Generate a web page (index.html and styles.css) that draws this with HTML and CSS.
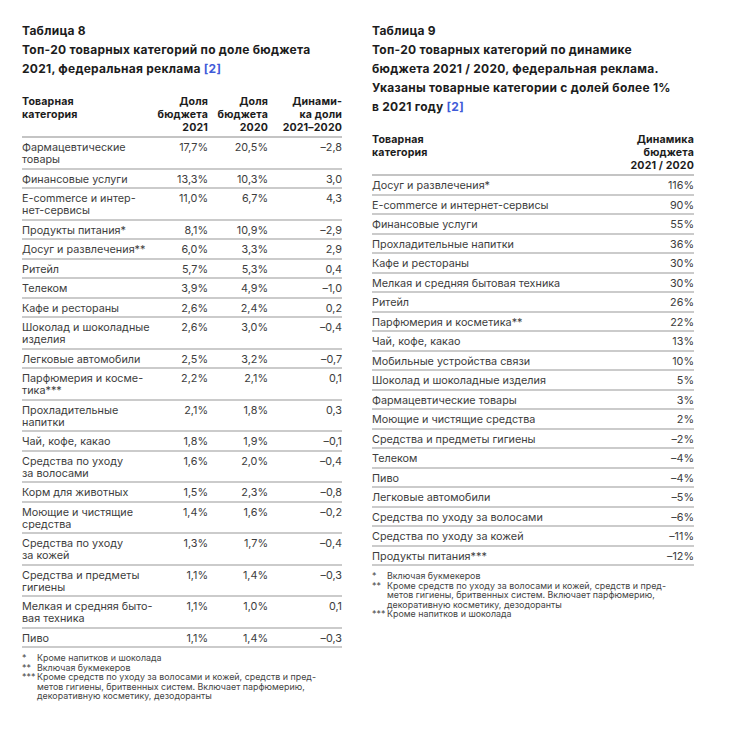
FILE: index.html
```html
<!DOCTYPE html>
<html lang="ru">
<head>
<meta charset="utf-8">
<title>Таблицы 8 и 9</title>
<link rel="stylesheet" href="styles.css">
</head>
<body>
<div class="page">
  <section class="panel panel-left">
    <h2 class="caption">Таблица 8<br>Топ-20 товарных категорий по доле бюджета<br>2021, федеральная реклама <span class="ref">[2]</span></h2>
    <table class="data data-8">
      <colgroup><col class="c-name"><col class="c-a"><col class="c-b"><col class="c-c"></colgroup>
      <thead>
        <tr><th class="name">Товарная<br>категория</th><th class="num">Доля<br>бюджета<br>2021</th><th class="num">Доля<br>бюджета<br>2020</th><th class="num">Динами-<br>ка доли<br>2021–2020</th></tr>
      </thead>
      <tbody>
        <tr><td>Фармацевтические<br>товары</td><td class="num">17,7%</td><td class="num">20,5%</td><td class="num">–2,8</td></tr>
        <tr><td>Финансовые услуги</td><td class="num">13,3%</td><td class="num">10,3%</td><td class="num">3,0</td></tr>
        <tr><td>E-commerce и интер-<br>нет-сервисы</td><td class="num">11,0%</td><td class="num">6,7%</td><td class="num">4,3</td></tr>
        <tr><td>Продукты питания*</td><td class="num">8,1%</td><td class="num">10,9%</td><td class="num">–2,9</td></tr>
        <tr><td>Досуг и развлечения**</td><td class="num">6,0%</td><td class="num">3,3%</td><td class="num">2,9</td></tr>
        <tr><td>Ритейл</td><td class="num">5,7%</td><td class="num">5,3%</td><td class="num">0,4</td></tr>
        <tr><td>Телеком</td><td class="num">3,9%</td><td class="num">4,9%</td><td class="num">–1,0</td></tr>
        <tr><td>Кафе и рестораны</td><td class="num">2,6%</td><td class="num">2,4%</td><td class="num">0,2</td></tr>
        <tr><td>Шоколад и шоколадные<br>изделия</td><td class="num">2,6%</td><td class="num">3,0%</td><td class="num">–0,4</td></tr>
        <tr><td>Легковые автомобили</td><td class="num">2,5%</td><td class="num">3,2%</td><td class="num">–0,7</td></tr>
        <tr><td>Парфюмерия и косме-<br>тика***</td><td class="num">2,2%</td><td class="num">2,1%</td><td class="num">0,1</td></tr>
        <tr><td>Прохладительные<br>напитки</td><td class="num">2,1%</td><td class="num">1,8%</td><td class="num">0,3</td></tr>
        <tr><td>Чай, кофе, какао</td><td class="num">1,8%</td><td class="num">1,9%</td><td class="num">–0,1</td></tr>
        <tr><td>Средства по уходу<br>за волосами</td><td class="num">1,6%</td><td class="num">2,0%</td><td class="num">–0,4</td></tr>
        <tr><td>Корм для животных</td><td class="num">1,5%</td><td class="num">2,3%</td><td class="num">–0,8</td></tr>
        <tr><td>Моющие и чистящие<br>средства</td><td class="num">1,4%</td><td class="num">1,6%</td><td class="num">–0,2</td></tr>
        <tr><td>Средства по уходу<br>за кожей</td><td class="num">1,3%</td><td class="num">1,7%</td><td class="num">–0,4</td></tr>
        <tr><td>Средства и предметы<br>гигиены</td><td class="num">1,1%</td><td class="num">1,4%</td><td class="num">–0,3</td></tr>
        <tr><td>Мелкая и средняя быто-<br>вая техника</td><td class="num">1,1%</td><td class="num">1,0%</td><td class="num">0,1</td></tr>
        <tr><td>Пиво</td><td class="num">1,1%</td><td class="num">1,4%</td><td class="num">–0,3</td></tr>
      </tbody>
    </table>
    <div class="notes">
      <span class="mark">*</span><span class="text">Кроме напитков и шоколада</span>
      <span class="mark">**</span><span class="text">Включая букмекеров</span>
      <span class="mark">***</span><span class="text">Кроме средств по уходу за волосами и кожей, средств и пред-<br>метов гигиены, бритвенных систем. Включает парфюмерию,<br>декоративную косметику, дезодоранты</span>
    </div>
  </section>

  <section class="panel panel-right">
    <h2 class="caption">Таблица 9<br>Топ-20 товарных категорий по динамике<br>бюджета 2021 / 2020, федеральная реклама.<br>Указаны товарные категории с долей более 1%<br>в 2021 году <span class="ref">[2]</span></h2>
    <table class="data data-9">
      <colgroup><col class="c-name9"><col class="c-val9"></colgroup>
      <thead>
        <tr><th class="name">Товарная<br>категория</th><th class="num">Динамика<br>бюджета<br>2021 / 2020</th></tr>
      </thead>
      <tbody>
        <tr><td>Досуг и развлечения*</td><td class="num">116%</td></tr>
        <tr><td>E-commerce и интернет-сервисы</td><td class="num">90%</td></tr>
        <tr><td>Финансовые услуги</td><td class="num">55%</td></tr>
        <tr><td>Прохладительные напитки</td><td class="num">36%</td></tr>
        <tr><td>Кафе и рестораны</td><td class="num">30%</td></tr>
        <tr><td>Мелкая и средняя бытовая техника</td><td class="num">30%</td></tr>
        <tr><td>Ритейл</td><td class="num">26%</td></tr>
        <tr><td>Парфюмерия и косметика**</td><td class="num">22%</td></tr>
        <tr><td>Чай, кофе, какао</td><td class="num">13%</td></tr>
        <tr><td>Мобильные устройства связи</td><td class="num">10%</td></tr>
        <tr><td>Шоколад и шоколадные изделия</td><td class="num">5%</td></tr>
        <tr><td>Фармацевтические товары</td><td class="num">3%</td></tr>
        <tr><td>Моющие и чистящие средства</td><td class="num">2%</td></tr>
        <tr><td>Средства и предметы гигиены</td><td class="num">–2%</td></tr>
        <tr><td>Телеком</td><td class="num">–4%</td></tr>
        <tr><td>Пиво</td><td class="num">–4%</td></tr>
        <tr><td>Легковые автомобили</td><td class="num">–5%</td></tr>
        <tr><td>Средства по уходу за волосами</td><td class="num">–6%</td></tr>
        <tr><td>Средства по уходу за кожей</td><td class="num">–11%</td></tr>
        <tr><td>Продукты питания***</td><td class="num">–12%</td></tr>
      </tbody>
    </table>
    <div class="notes">
      <span class="mark">*</span><span class="text">Включая букмекеров</span>
      <span class="mark">**</span><span class="text">Кроме средств по уходу за волосами и кожей, средств и пред-<br>метов гигиены, бритвенных систем. Включает парфюмерию,<br>декоративную косметику, дезодоранты</span>
      <span class="mark">***</span><span class="text">Кроме напитков и шоколада</span>
    </div>
  </section>
</div>
</body>
</html>
```

FILE: styles.css
```css
* { box-sizing: border-box; }

html, body {
  margin: 0;
  padding: 0;
  background: #ffffff;
}

body {
  font-family: "Inter", "Noto Sans", "DejaVu Sans", sans-serif;
  color: #3d3d3d;
}

.page {
  display: flex;
  align-items: flex-start;
  padding: 21px 0 0 22px;
  gap: 30px;
}

.panel-left { width: 320px; }
.panel-right { width: 322px; }

.caption {
  margin: 0 0 17px;
  font-size: 12px;
  line-height: 19px;
  font-weight: 700;
  color: #1c1c1c;
  letter-spacing: 0.25px;
}

.ref { color: #3f5bd8; }

.data {
  width: 100%;
  border-collapse: collapse;
  table-layout: fixed;
  font-size: 10.8px;
  line-height: 12px;
}

.c-name { width: 134px; }
.c-a { width: 52px; }
.c-b { width: 60px; }
.c-c { width: 74px; }

.c-name9 { width: 240px; }
.c-val9 { width: 82px; }

.data th {
  font-weight: 700;
  color: #1c1c1c;
  text-align: left;
  vertical-align: bottom;
  padding: 0 0 2px;
  border-bottom: 2px solid #c4c4c4;
  font-size: 10.6px;
  line-height: 13px;
  letter-spacing: 0.15px;
  white-space: nowrap;
}

.data th.name { vertical-align: top; }

.data td {
  vertical-align: top;
  padding: 4px 0 1.5px;
  border-bottom: 2px solid #cbcbcb;
  text-align: left;
  white-space: nowrap;
}

.data .num { text-align: right; }

.notes {
  display: grid;
  grid-template-columns: 15px 1fr;
  margin-top: 5px;
  font-size: 8.9px;
  line-height: 9.6px;
  color: #444;
}

.notes .mark { white-space: nowrap; }
```
